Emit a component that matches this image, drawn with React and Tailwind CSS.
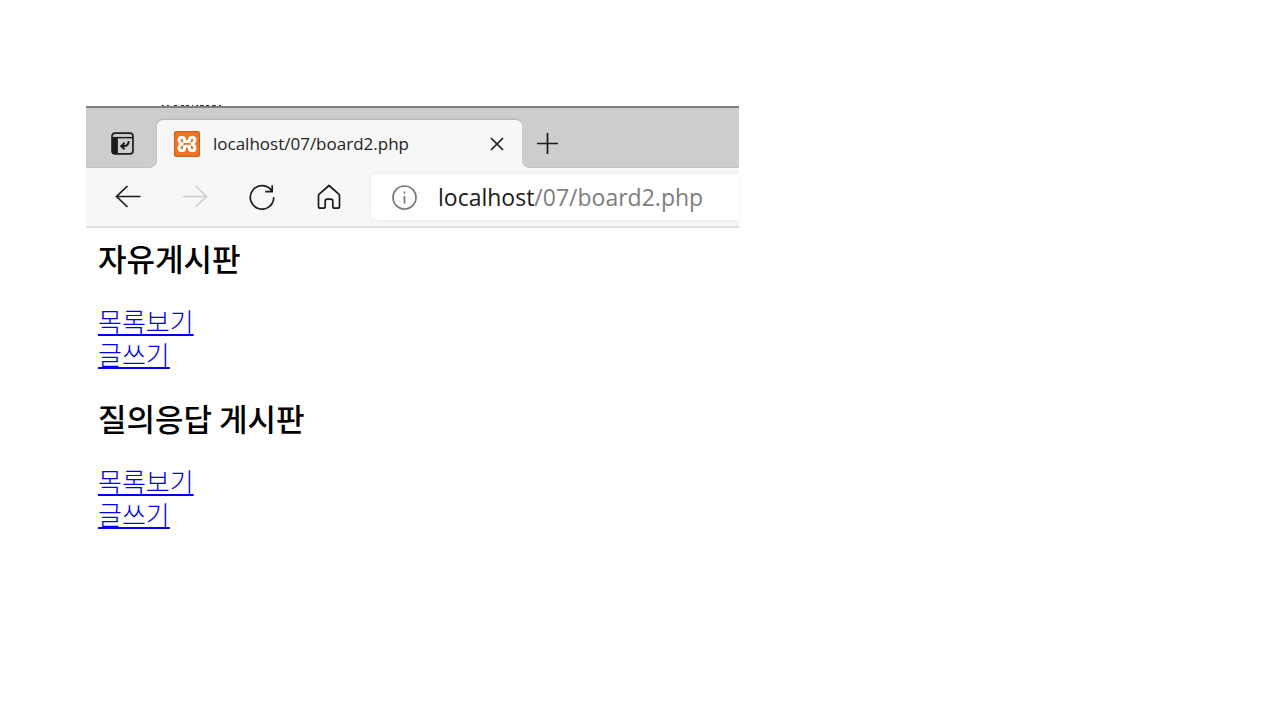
function CollectionsIcon() {
  return (
    <svg width="23" height="23" viewBox="0 0 22 22" fill="none" stroke="#1b1b1b" strokeWidth="1.6" aria-hidden="true">
      <rect x="1" y="1" width="20" height="20" rx="3" />
      <path d="M1 5.4h20" strokeWidth="1.4" />
      <path d="M1 5h5.6v16H4a3 3 0 0 1-3-3z" fill="#1b1b1b" stroke="none" />
      <path d="M17 8.800q-.6 4.700-4.200 4.700H10M13 10.300l-3.200 3.200 3.200 3" strokeWidth="1.900" />
    </svg>
  );
}

function XamppIcon() {
  return (
    <svg width="26" height="26" viewBox="0 0 26 26" fill="none" className="shrink-0" aria-hidden="true">
      <rect x="0.500" y="0.500" width="25" height="25" rx="1.500" fill="#ee7424" stroke="#c9601d" />
      <path
        d="M10.500 10.500V8.400q0-2-1.900-2H7.400q-2.200 0-2.200 2.200v1.200q0 1.500 1.500 2.100l1.100.7q.8.400 0 .8l-1.100.7q-1.500.6-1.500 2.100v1.200q0 2.200 2.200 2.200h1.200q1.900 0 1.900-2v-1.100q0-1.300 1.300-1.300h2.400q1.300 0 1.300 1.300v1.100q0 2 1.900 2h1.200q2.200 0 2.200-2.200v-1.200q0-1.500-1.500-2.100l-1.100-.7q-.8-.4 0-.8l1.100-.7q1.500-.6 1.500-2.100V8.600q0-2.200-2.200-2.200h-1.200q-1.900 0-1.900 2v.8q0 1.300-1.300 1.300z"
        stroke="#fff"
        strokeWidth="3"
        strokeLinejoin="round"
      />
    </svg>
  );
}

function Section({ title }) {
  return (
    <section>
      <h3 className="text-[31px] leading-9 font-medium">{title}</h3>
      <ul className="mt-7 text-[26px] leading-[33px] font-light text-[#0000ee]">
        <li>
          <a href="#list" className="underline decoration-2 underline-offset-2">목록보기</a>
        </li>
        <li>
          <a href="#write" className="underline decoration-2 underline-offset-2">글쓰기</a>
        </li>
      </ul>
    </section>
  );
}

const uiFont = "font-['Open_Sans','Noto_Sans',sans-serif]";

export default function App() {
  return (
    <div className="min-h-screen bg-white pt-[104px] pl-[86px]">
      <div className="w-[54.7%] min-w-[600px] text-black">
        <svg width="64" height="2" viewBox="0 0 64 2" className="ml-[75px] block" aria-hidden="true">
          <path d="M1 1.500h2M6 1.500h2M13 1.500h3M20 1.500h3M25 1.500h3M31 1.500h1M35 1.500h2M39 1.500h4M45 1.500h3M51 1.500h4M58 1.500h2" stroke="#333" />
        </svg>
        <div className={`${uiFont} flex h-[62px] border-t-2 border-[#7f7f7f] bg-linear-to-b from-[#cdcdcd] from-50% to-[#f7f7f7] to-50%`}>
          <div className="flex w-[71px] items-center justify-center rounded-br-lg border-b border-[#bfbfbf] bg-[#cdcdcd] pt-3 pl-0.5">
            <button type="button" aria-label="Tab actions"><CollectionsIcon /></button>
          </div>
          <div className="mt-3 flex w-[365px] items-center rounded-t-md bg-[#f7f7f7] pr-[18px] pl-[17px] shadow-[0_-1px_2px_#00000026]">
            <XamppIcon />
            <span className="ml-[13px] flex-1 text-[17px] leading-6 text-[#222]">localhost/07/board2.php</span>
            <button type="button" aria-label="Close tab">
              <svg width="14" height="14" viewBox="0 0 14 14" fill="none" stroke="#1b1b1b" strokeWidth="1.700" aria-hidden="true">
                <path d="m1 1 12 12M13 1 1 13" />
              </svg>
            </button>
          </div>
          <div className="flex flex-1 items-center rounded-bl-lg border-b border-[#bfbfbf] bg-[#cdcdcd] pt-3 pl-[15px]">
            <button type="button" aria-label="New tab">
              <svg width="21" height="21" viewBox="0 0 21 21" fill="none" stroke="#1b1b1b" strokeWidth="1.700" aria-hidden="true">
                <path d="M10.500 0v21M0 10.500h21" />
              </svg>
            </button>
          </div>
        </div>
        <div className={`${uiFont} flex h-[60px] items-center border-b-2 border-[#dedede] bg-[#f7f7f7] pl-[29px] text-[#1b1b1b]`}>
          <div className="flex items-center gap-[41px]">
            <button type="button" aria-label="Back">
              <svg width="26" height="26" viewBox="0 0 26 26" fill="none" stroke="currentColor" strokeWidth="1.700" aria-hidden="true">
                <path d="M25.500 12.500H1.500M12.500 2 1.500 12.500l11 10.500" />
              </svg>
            </button>
            <button type="button" aria-label="Forward" disabled className="text-[#cfcfcf]">
              <svg width="26" height="26" viewBox="0 0 26 26" fill="none" stroke="currentColor" strokeWidth="1.700" aria-hidden="true">
                <path d="M.5 12.500h24M13.500 2l11 10.500-11 10.500" />
              </svg>
            </button>
            <button type="button" aria-label="Refresh">
              <svg width="26" height="26" viewBox="0 0 26 26" fill="none" stroke="currentColor" strokeWidth="1.700" aria-hidden="true">
                <path d="M24.700 13.200A11.700 11.700 0 1 1 22.800 7M23.200 1.200v6.500h-7" />
              </svg>
            </button>
            <button type="button" aria-label="Home">
              <svg width="26" height="26" viewBox="0 0 26 26" fill="none" stroke="currentColor" strokeWidth="1.700" strokeLinejoin="round" aria-hidden="true">
                <path d="M13 1.500 3.200 10.200q-.7.700-.7 1.600v10.400q0 2 2 2h2.700q2 0 2-2v-5q0-2 2-2h3.600q2 0 2 2v5q0 2 2 2h2.700q2 0 2-2V11.800q0-.9-.7-1.600z" />
              </svg>
            </button>
          </div>
          <div className="ml-[29px] flex h-[46px] flex-1 items-center rounded-l-md bg-white pl-[21px] shadow-[0_0_4px_#00000014]">
            <svg width="25" height="25" viewBox="0 0 25 25" fill="none" stroke="#767676" strokeWidth="1.700" aria-hidden="true">
              <circle cx="12.500" cy="12.500" r="11.500" />
              <path d="M12.500 11v7.500M12.500 6.500v2" />
            </svg>
            <a href="#top" className="ml-[21px] text-[23px] leading-8">localhost<span className="text-[#7d7d7d]">/07/board2.php</span></a>
          </div>
        </div>
        <main className="flex flex-col gap-[30px] pt-3 pl-3 font-['Noto_Sans_CJK_KR',sans-serif]">
          <Section title="자유게시판" />
          <Section title="질의응답 게시판" />
        </main>
      </div>
    </div>
  );
}
